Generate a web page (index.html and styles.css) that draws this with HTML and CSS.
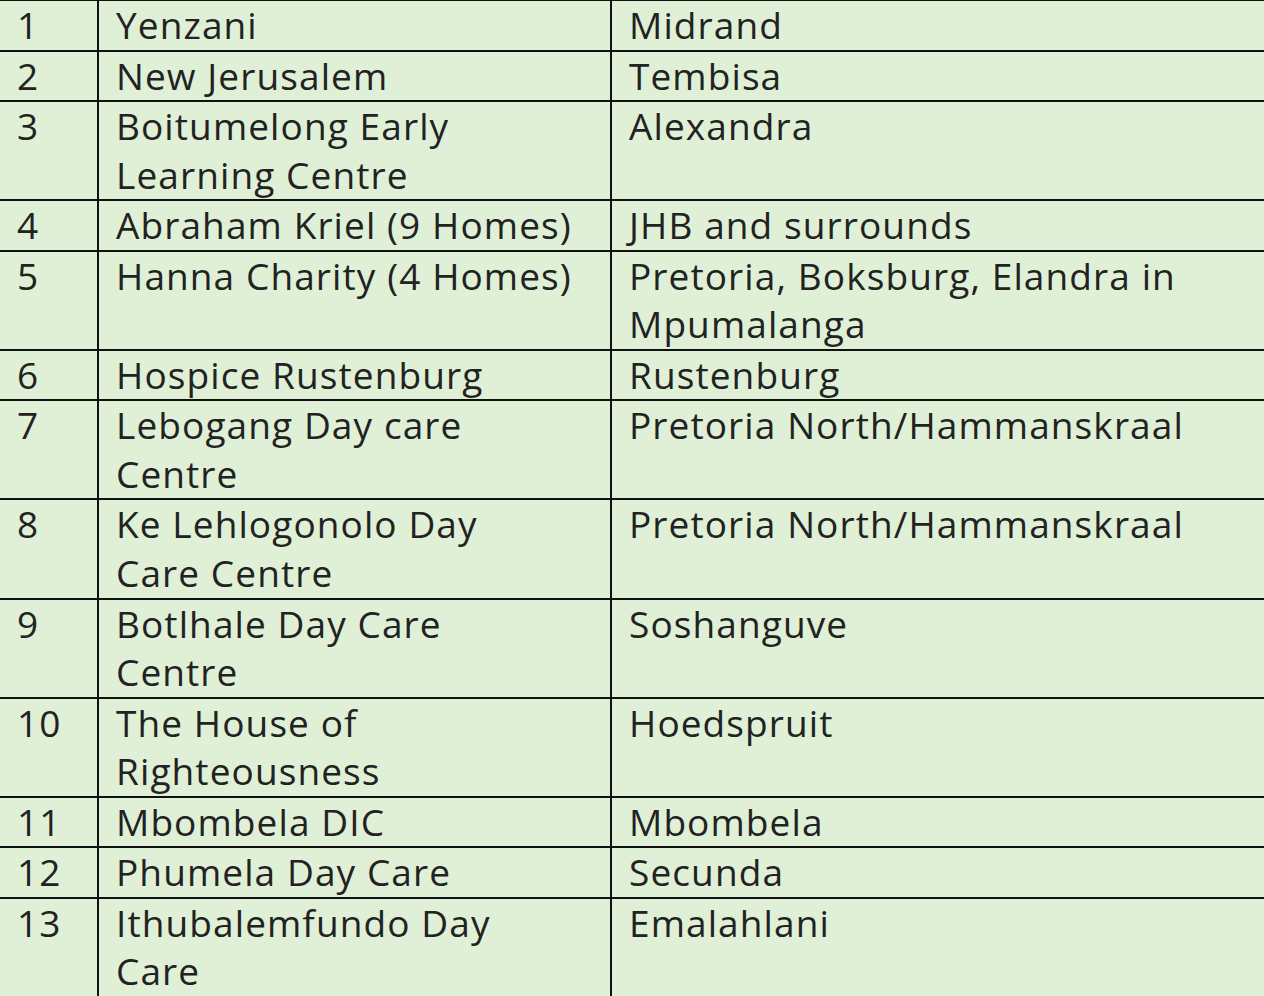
FILE: index.html
```html
<!DOCTYPE html>
<html lang="en">
<head>
<meta charset="utf-8">
<title>Homes</title>
<link rel="stylesheet" href="styles.css">
</head>
<body>
<table class="homes">
  <colgroup>
    <col class="c-num">
    <col class="c-name">
    <col class="c-place">
  </colgroup>
  <tbody>
    <tr><td>1</td><td>Yenzani</td><td>Midrand</td></tr>
    <tr><td>2</td><td>New Jerusalem</td><td>Tembisa</td></tr>
    <tr><td>3</td><td>Boitumelong Early<br>Learning Centre</td><td>Alexandra</td></tr>
    <tr><td>4</td><td>Abraham Kriel (9 Homes)</td><td>JHB and surrounds</td></tr>
    <tr><td>5</td><td>Hanna Charity (4 Homes)</td><td>Pretoria, Boksburg, Elandra in<br>Mpumalanga</td></tr>
    <tr><td>6</td><td>Hospice Rustenburg</td><td>Rustenburg</td></tr>
    <tr><td>7</td><td>Lebogang Day care<br>Centre</td><td>Pretoria North/Hammanskraal</td></tr>
    <tr><td>8</td><td>Ke Lehlogonolo Day<br>Care Centre</td><td>Pretoria North/Hammanskraal</td></tr>
    <tr><td>9</td><td>Botlhale Day Care<br>Centre</td><td>Soshanguve</td></tr>
    <tr><td>10</td><td>The House of<br>Righteousness</td><td>Hoedspruit</td></tr>
    <tr><td>11</td><td>Mbombela DIC</td><td>Mbombela</td></tr>
    <tr><td>12</td><td>Phumela Day Care</td><td>Secunda</td></tr>
    <tr><td>13</td><td>Ithubalemfundo Day<br>Care</td><td>Emalahlani</td></tr>
  </tbody>
</table>
</body>
</html>
```
FILE: styles.css
```css
html, body {
  margin: 0;
  padding: 0;
  background: #dff0d6;
  overflow: hidden;
}

.homes {
  border-collapse: collapse;
  table-layout: fixed;
  width: 1266px;
  margin: -1px 0 0 -2px;
  background: #dff0d6;
  font-family: "Open Sans", "Liberation Sans", sans-serif;
  font-size: 37px;
  letter-spacing: 1.1px;
  color: #222222;
}

.c-num { width: 99px; }
.c-name { width: 513px; }
.c-place { width: 654px; }

.homes td {
  border: 2px solid #111111;
  padding: 0 0 0 17px;
  line-height: 48.55px;
  vertical-align: top;
  white-space: nowrap;
  overflow: hidden;
}
```
